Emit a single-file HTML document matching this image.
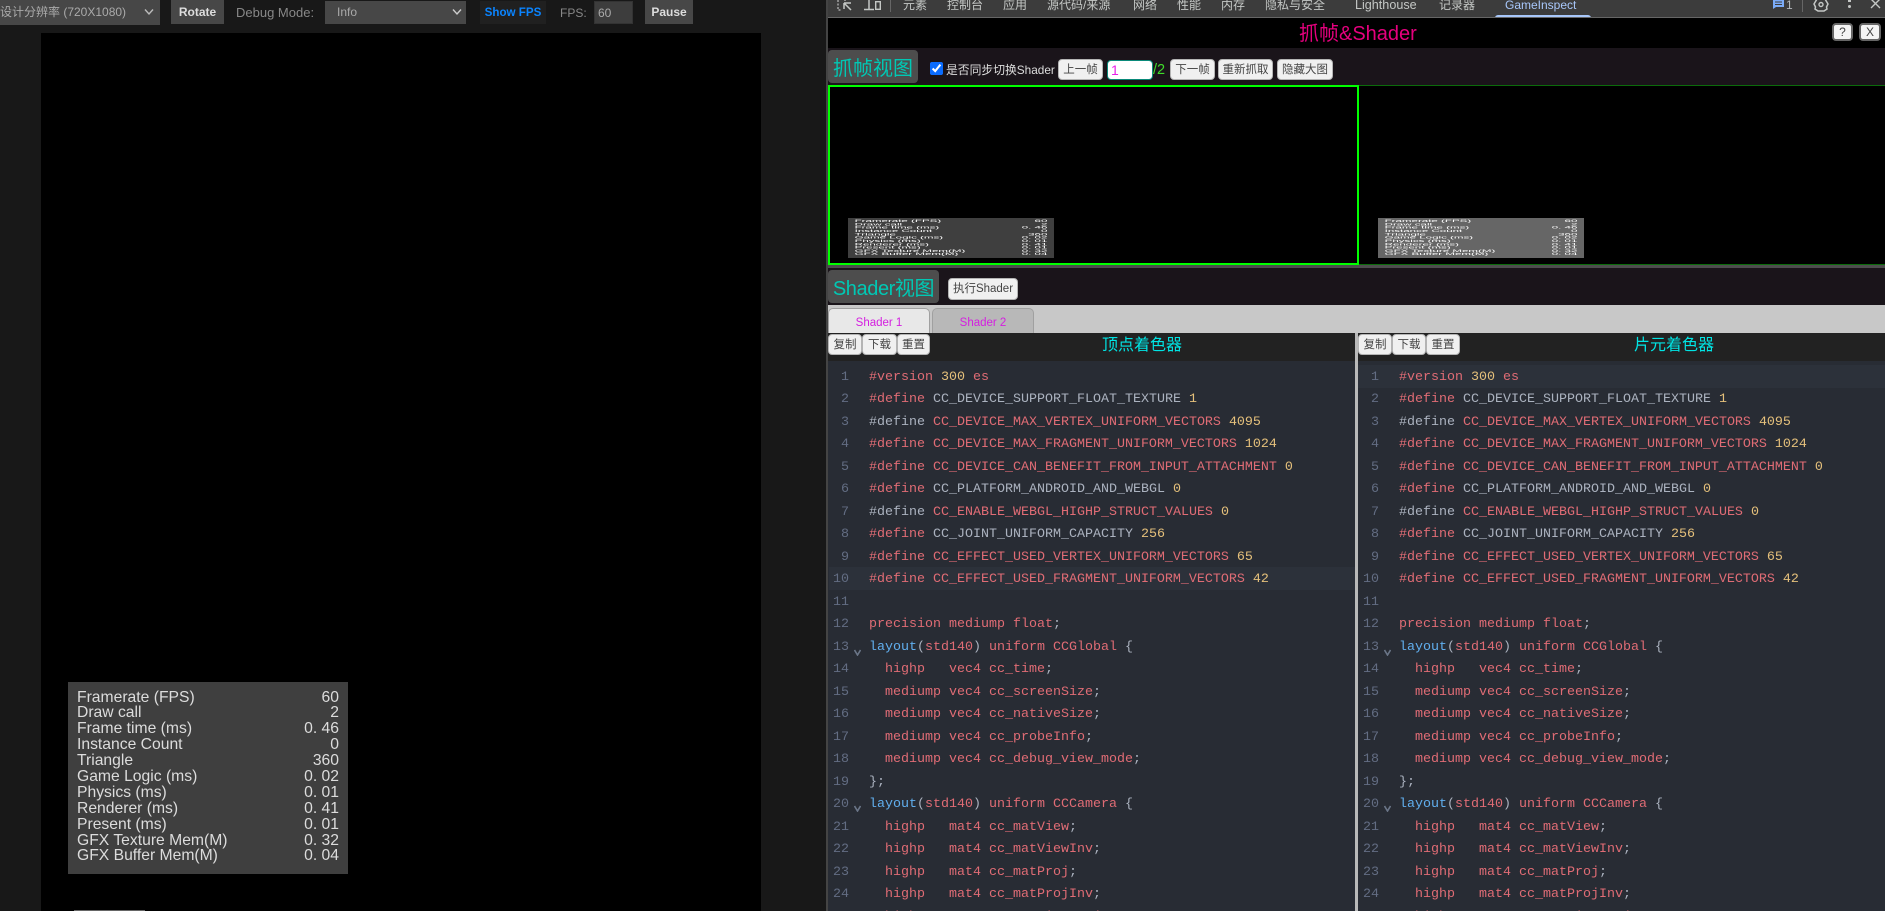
<!DOCTYPE html>
<html lang="zh">
<head>
<meta charset="utf-8">
<title>GameInspect</title>
<style>
*{box-sizing:border-box}
html,body{margin:0;padding:0;width:1885px;height:911px;overflow:hidden;background:#181818}
body{position:relative;font-family:"Liberation Sans","Noto Sans CJK SC",sans-serif;font-size:12px}
.a{position:absolute;white-space:nowrap}
.top{height:24px;line-height:24px;text-align:center;background:#474747;color:#ddd;font-size:12px;font-weight:bold}
.tab{position:absolute;top:-4px;line-height:18px;font-size:12px;color:#c4c7c5;white-space:nowrap}
.btn{position:absolute;background:#f0f0f0;border:1px solid #b4b4b4;border-radius:4px;color:#444;text-align:center;font-size:11.5px;white-space:nowrap}
.sec{position:absolute;background:#4d4d4d;border-radius:4px;color:#00c8b4;font-size:20px;text-align:center;white-space:nowrap}
.stats{position:absolute;width:280px;height:192px;background:#3f3f3f;color:#dcdcdc;font-size:15.7px;line-height:15.9px;padding:7.5px 9px 0}
.stats div{display:flex;justify-content:space-between;height:15.9px;white-space:nowrap}
.thumb{transform-origin:0 0;transform:scale(.7357,.2083);color:#fff}
.ed{position:absolute;top:361px;height:550px;background:#282c34;overflow:hidden}
.hl{position:absolute;height:22.5px;background:#2c313a}
.gut,.c{position:absolute;top:5.75px;font-family:"Liberation Mono",monospace;font-size:13.33px;line-height:22.5px;white-space:pre}
.gut{left:0;width:21px;text-align:right;color:#636d83}
.c{left:41px;color:#e06c75}
.c span{color:#abb2bf}
.c span.y{color:#e5c07b}
.c span.b{color:#61afef}
.bar{position:absolute;top:333px;height:28px;background:#222}
.ttl{position:absolute;top:333px;line-height:25px;color:#00e5e5;font-size:16px;white-space:nowrap}
.shd{position:absolute;top:308px;height:25px;width:102px;border:1px solid #a0a0a0;border-bottom:0;border-radius:5px 5px 0 0;color:#d41fe0;text-align:center;line-height:28px;font-size:11.5px}
</style>
</head>
<body>

<!-- left toolbar -->
<div class="a" style="left:0;top:0;width:160px;height:25px;background:#474747;color:#aaa;line-height:24px;font-size:12px">设计分辨率 (720X1080)</div>
<svg class="a" style="left:144px;top:8px" width="10" height="8" viewBox="0 0 10 8"><path d="M1 1.5 5 6 9 1.5" fill="none" stroke="#bbb" stroke-width="1.4"/></svg>
<div class="a top" style="left:171px;top:0;width:53px">Rotate</div>
<div class="a" style="left:236px;top:1px;line-height:24px;font-size:13px;color:#888">Debug Mode:</div>
<div class="a" style="left:325px;top:1px;width:141px;height:23px;background:#474747;color:#aaa;line-height:23px;padding-left:12px;font-size:12px">Info</div>
<svg class="a" style="left:452px;top:8px" width="10" height="8" viewBox="0 0 10 8"><path d="M1 1.5 5 6 9 1.5" fill="none" stroke="#ccc" stroke-width="1.4"/></svg>
<div class="a" style="left:480px;top:1px;width:66px;height:23px;line-height:24px;text-align:center;background:#202020;color:#0a84ff;font-weight:bold;font-size:11.6px">Show FPS</div>
<div class="a" style="left:560px;top:1px;line-height:24px;font-size:12px;color:#888">FPS:</div>
<div class="a" style="left:594px;top:1px;width:39px;height:23px;line-height:23px;background:#3d3d3d;border:1px solid #333;color:#aaa;padding-left:3px;font-size:12px">60</div>
<div class="a top" style="left:645px;top:0;width:48px">Pause</div>

<!-- canvas -->
<div class="a" style="left:41px;top:33px;width:720px;height:878px;background:#000"></div>
<div class="stats" style="left:68px;top:682px">
<div><span>Framerate (FPS)</span><span>60</span></div>
<div><span>Draw call</span><span>2</span></div>
<div><span>Frame time (ms)</span><span>0. 46</span></div>
<div><span>Instance Count</span><span>0</span></div>
<div><span>Triangle</span><span>360</span></div>
<div><span>Game Logic (ms)</span><span>0. 02</span></div>
<div><span>Physics (ms)</span><span>0. 01</span></div>
<div><span>Renderer (ms)</span><span>0. 41</span></div>
<div><span>Present (ms)</span><span>0. 01</span></div>
<div><span>GFX Texture Mem(M)</span><span>0. 32</span></div>
<div><span>GFX Buffer Mem(M)</span><span>0. 04</span></div>
</div>
<div class="a" style="left:74px;top:910px;width:71px;height:1px;background:#666"></div>

<!-- devtools bar -->
<div class="a" style="left:826px;top:0;width:1059px;height:18px;background:#3c3c3c;border-bottom:1px solid #666;overflow:hidden">
<svg class="a" style="left:11px;top:0" width="16" height="12" viewBox="0 0 16 12"><path d="M1 0v10h3M1 0h0M7 0h2M9 10h0" fill="none" stroke="#aaa" stroke-width="1.4" stroke-dasharray="2 1.5"/><path d="M7 3h7M7 3v6M7 3l7 7" fill="none" stroke="#c4c7c5" stroke-width="1.5"/></svg>
<svg class="a" style="left:38px;top:0" width="18" height="12" viewBox="0 0 18 12"><path d="M5 0v9M0 9.5h10" fill="none" stroke="#c4c7c5" stroke-width="1.5"/><rect x="11.7" y="1.7" width="4.6" height="7.6" fill="none" stroke="#c4c7c5" stroke-width="1.4"/></svg>
<div class="a" style="left:64px;top:0;width:1px;height:12px;background:#666"></div>
<span class="tab" style="left:77px">元素</span>
<span class="tab" style="left:121px">控制台</span>
<span class="tab" style="left:177px">应用</span>
<span class="tab" style="left:221px">源代码/来源</span>
<span class="tab" style="left:307px">网络</span>
<span class="tab" style="left:351px">性能</span>
<span class="tab" style="left:395px">内存</span>
<span class="tab" style="left:439px">隐私与安全</span>
<span class="tab" style="left:529px;font-size:12.6px">Lighthouse</span>
<span class="tab" style="left:613px">记录器</span>
<span class="tab" style="left:679px;color:#a8c7fa">GameInspect</span>
<div class="a" style="left:669px;top:15px;width:96px;height:3px;background:#a8c7fa;border-radius:3px 3px 0 0"></div>
<svg class="a" style="left:947px;top:0" width="11" height="9" viewBox="0 0 11 9"><path d="M0 0h11v7H3L0 9z" fill="#7cacf8"/><path d="M2 2h7M2 4.5h7" stroke="#3c3c3c" stroke-width="1"/></svg>
<span class="tab" style="left:960px;color:#b5b9bd">1</span>
<div class="a" style="left:976px;top:0;width:1px;height:12px;background:#666"></div>
<svg class="a" style="left:987px;top:0" width="16" height="12" viewBox="0 0 16 12"><path d="M4 -1h8l3 5-1.5 3 .5 2-3 2H5L2 9l.5-2L1 4z" fill="none" stroke="#c4c7c5" stroke-width="1.5"/><circle cx="8" cy="4.5" r="2" fill="none" stroke="#c4c7c5" stroke-width="1.4"/></svg>
<div class="a" style="left:1022px;top:0;width:3px;height:2px;background:#c4c7c5"></div>
<div class="a" style="left:1022px;top:5px;width:3px;height:3px;background:#c4c7c5;border-radius:50%"></div>
<svg class="a" style="left:1044px;top:0" width="11" height="10" viewBox="0 0 11 10"><path d="M1 -1 10 8M10 -1 1 8" fill="none" stroke="#c4c7c5" stroke-width="1.4"/></svg>
</div>
<div class="a" style="left:826px;top:0;width:2px;height:911px;background:#444"></div>

<!-- header -->
<div class="a" style="left:828px;top:18px;width:1057px;height:30px;background:#000"></div>
<div class="a" style="left:1299px;top:18px;line-height:33px;color:#e6007e;font-size:20px">抓帧&amp;Shader</div>
<div class="btn" style="left:1832px;top:23px;width:21px;height:18px;line-height:15px;background:#f4f4f4;border:2px solid #666;font-size:12px">?</div>
<div class="btn" style="left:1859px;top:23px;width:22px;height:18px;line-height:15px;background:#f4f4f4;border:2px solid #666;font-size:12px">X</div>

<!-- capture row -->
<div class="a" style="left:828px;top:48px;width:1057px;height:37px;background:#1a141a"></div>
<div class="sec" style="left:828px;top:50px;width:90px;height:33px;line-height:39px">抓帧视图</div>
<input type="checkbox" checked class="a" style="left:930px;top:62px;width:13px;height:13px;margin:0;accent-color:#0a6cff">
<div class="a" style="left:946px;top:60px;line-height:21px;color:#ddd;font-size:11.8px">是否同步切换Shader</div>
<div class="btn" style="left:1058px;top:59px;width:45px;height:21px;line-height:21px">上一帧</div>
<div class="a" style="left:1107px;top:60px;width:46px;height:20px;background:#fff;border:1px solid #0a8a7a;border-radius:4px;color:#e81ee8;font-size:14px;line-height:18px;padding-left:3px">1</div>
<div class="a" style="left:1153px;top:60px;line-height:20px;color:#3fdc2a;font-size:14.5px">/2</div>
<div class="btn" style="left:1170px;top:59px;width:45px;height:21px;line-height:21px">下一帧</div>
<div class="btn" style="left:1218px;top:59px;width:55px;height:21px;line-height:21px">重新抓取</div>
<div class="btn" style="left:1277px;top:59px;width:56px;height:21px;line-height:21px">隐藏大图</div>

<!-- frames -->
<div class="a" style="left:828px;top:85px;width:1057px;height:180px;background:#000"></div>
<div class="a" style="left:1359px;top:85px;width:526px;height:180px;border-top:1px solid #0b6b0b;border-bottom:1px solid #0b6b0b"></div>
<div class="a" style="left:828px;top:85px;width:531px;height:180px;border:2px solid #0f0"></div>
<div class="stats thumb" style="left:848px;top:218px">
<div><span>Framerate (FPS)</span><span>60</span></div>
<div><span>Draw call</span><span>2</span></div>
<div><span>Frame time (ms)</span><span>0. 46</span></div>
<div><span>Instance Count</span><span>0</span></div>
<div><span>Triangle</span><span>360</span></div>
<div><span>Game Logic (ms)</span><span>0. 02</span></div>
<div><span>Physics (ms)</span><span>0. 01</span></div>
<div><span>Renderer (ms)</span><span>0. 41</span></div>
<div><span>Present (ms)</span><span>0. 01</span></div>
<div><span>GFX Texture Mem(M)</span><span>0. 32</span></div>
<div><span>GFX Buffer Mem(M)</span><span>0. 04</span></div>
</div>
<div class="stats thumb" style="left:1378px;top:218px;background:#666">
<div><span>Framerate (FPS)</span><span>60</span></div>
<div><span>Draw call</span><span>2</span></div>
<div><span>Frame time (ms)</span><span>0. 46</span></div>
<div><span>Instance Count</span><span>0</span></div>
<div><span>Triangle</span><span>360</span></div>
<div><span>Game Logic (ms)</span><span>0. 02</span></div>
<div><span>Physics (ms)</span><span>0. 01</span></div>
<div><span>Renderer (ms)</span><span>0. 41</span></div>
<div><span>Present (ms)</span><span>0. 01</span></div>
<div><span>GFX Texture Mem(M)</span><span>0. 32</span></div>
<div><span>GFX Buffer Mem(M)</span><span>0. 04</span></div>
</div>
<div class="a" style="left:828px;top:265px;width:1057px;height:3px;background:#4d4d4d"></div>

<!-- shader row -->
<div class="a" style="left:828px;top:268px;width:1057px;height:37px;background:#1a141a"></div>
<div class="sec" style="left:828px;top:270px;width:111px;height:33px;line-height:39px;letter-spacing:-.4px">Shader视图</div>
<div class="btn" style="left:948px;top:278px;width:70px;height:22px;line-height:20px">执行Shader</div>
<div class="a" style="left:828px;top:305px;width:1057px;height:28px;background:#c8c8c8"></div>
<div class="shd" style="left:828px;background:#e8e8e8">Shader 1</div>
<div class="shd" style="left:932px;background:#b8b8b8">Shader 2</div>

<!-- shader toolbars -->
<div class="bar" style="left:828px;width:528px"></div>
<div class="bar" style="left:1358px;width:527px"></div>
<div class="btn" style="left:828px;top:334px;width:34px;height:21px;line-height:21px">复制</div>
<div class="btn" style="left:862px;top:334px;width:35px;height:21px;line-height:21px">下载</div>
<div class="btn" style="left:897px;top:334px;width:33px;height:21px;line-height:21px">重置</div>
<div class="ttl" style="left:1102px">顶点着色器</div>
<div class="btn" style="left:1358px;top:334px;width:34px;height:21px;line-height:21px">复制</div>
<div class="btn" style="left:1392px;top:334px;width:34px;height:21px;line-height:21px">下载</div>
<div class="btn" style="left:1426px;top:334px;width:34px;height:21px;line-height:21px">重置</div>
<div class="ttl" style="left:1634px">片元着色器</div>
<div class="a" style="left:1355px;top:333px;width:3px;height:578px;background:#b9b9b9"></div>

<!-- left editor -->
<div class="ed" style="left:828px;width:527px">
<div class="hl" style="left:1px;right:0;top:206px"></div>
<div class="gut">1
2
3
4
5
6
7
8
9
10
11
12
13
14
15
16
17
18
19
20
21
22
23
24
25</div>
<svg class="a" style="left:26px;top:288px" width="7" height="7" viewBox="0 0 7 7"><path d="M.5 1 3.5 6 6.5 1" fill="none" stroke="#6b7688" stroke-width="1.6"/></svg>
<svg class="a" style="left:26px;top:444px" width="7" height="7" viewBox="0 0 7 7"><path d="M.5 1 3.5 6 6.5 1" fill="none" stroke="#6b7688" stroke-width="1.6"/></svg>
<div class="c">#version <span class="y">300</span> es
#define <span>CC_DEVICE_SUPPORT_FLOAT_TEXTURE</span> <span class="y">1</span>
<span>#define</span> CC_DEVICE_MAX_VERTEX_UNIFORM_VECTORS <span class="y">4095</span>
#define CC_DEVICE_MAX_FRAGMENT_UNIFORM_VECTORS <span class="y">1024</span>
#define CC_DEVICE_CAN_BENEFIT_FROM_INPUT_ATTACHMENT <span class="y">0</span>
#define <span>CC_PLATFORM_ANDROID_AND_WEBGL</span> <span class="y">0</span>
<span>#define</span> CC_ENABLE_WEBGL_HIGHP_STRUCT_VALUES <span class="y">0</span>
#define <span>CC_JOINT_UNIFORM_CAPACITY</span> <span class="y">256</span>
#define CC_EFFECT_USED_VERTEX_UNIFORM_VECTORS <span class="y">65</span>
#define CC_EFFECT_USED_FRAGMENT_UNIFORM_VECTORS <span class="y">42</span>

precision mediump float<span>;</span>
<span class="b">layout</span><span>(</span>std140<span>)</span> uniform CCGlobal <span>{</span>
  highp   vec4 cc_time<span>;</span>
  mediump vec4 cc_screenSize<span>;</span>
  mediump vec4 cc_nativeSize<span>;</span>
  mediump vec4 cc_probeInfo<span>;</span>
  mediump vec4 cc_debug_view_mode<span>;</span>
<span>};</span>
<span class="b">layout</span><span>(</span>std140<span>)</span> uniform CCCamera <span>{</span>
  highp   mat4 cc_matView<span>;</span>
  highp   mat4 cc_matViewInv<span>;</span>
  highp   mat4 cc_matProj<span>;</span>
  highp   mat4 cc_matProjInv<span>;</span>
  highp   mat4 cc_matViewProj<span>;</span></div>
</div>

<!-- right editor -->
<div class="ed" style="left:1358px;width:527px">
<div class="hl" style="left:0;right:0;top:4px"></div>
<div class="gut">1
2
3
4
5
6
7
8
9
10
11
12
13
14
15
16
17
18
19
20
21
22
23
24
25</div>
<svg class="a" style="left:26px;top:288px" width="7" height="7" viewBox="0 0 7 7"><path d="M.5 1 3.5 6 6.5 1" fill="none" stroke="#6b7688" stroke-width="1.6"/></svg>
<svg class="a" style="left:26px;top:444px" width="7" height="7" viewBox="0 0 7 7"><path d="M.5 1 3.5 6 6.5 1" fill="none" stroke="#6b7688" stroke-width="1.6"/></svg>
<div class="c">#version <span class="y">300</span> es
#define <span>CC_DEVICE_SUPPORT_FLOAT_TEXTURE</span> <span class="y">1</span>
<span>#define</span> CC_DEVICE_MAX_VERTEX_UNIFORM_VECTORS <span class="y">4095</span>
#define CC_DEVICE_MAX_FRAGMENT_UNIFORM_VECTORS <span class="y">1024</span>
#define CC_DEVICE_CAN_BENEFIT_FROM_INPUT_ATTACHMENT <span class="y">0</span>
#define <span>CC_PLATFORM_ANDROID_AND_WEBGL</span> <span class="y">0</span>
<span>#define</span> CC_ENABLE_WEBGL_HIGHP_STRUCT_VALUES <span class="y">0</span>
#define <span>CC_JOINT_UNIFORM_CAPACITY</span> <span class="y">256</span>
#define CC_EFFECT_USED_VERTEX_UNIFORM_VECTORS <span class="y">65</span>
#define CC_EFFECT_USED_FRAGMENT_UNIFORM_VECTORS <span class="y">42</span>

precision mediump float<span>;</span>
<span class="b">layout</span><span>(</span>std140<span>)</span> uniform CCGlobal <span>{</span>
  highp   vec4 cc_time<span>;</span>
  mediump vec4 cc_screenSize<span>;</span>
  mediump vec4 cc_nativeSize<span>;</span>
  mediump vec4 cc_probeInfo<span>;</span>
  mediump vec4 cc_debug_view_mode<span>;</span>
<span>};</span>
<span class="b">layout</span><span>(</span>std140<span>)</span> uniform CCCamera <span>{</span>
  highp   mat4 cc_matView<span>;</span>
  highp   mat4 cc_matViewInv<span>;</span>
  highp   mat4 cc_matProj<span>;</span>
  highp   mat4 cc_matProjInv<span>;</span>
  highp   mat4 cc_matViewProj<span>;</span></div>
</div>

</body>
</html>
